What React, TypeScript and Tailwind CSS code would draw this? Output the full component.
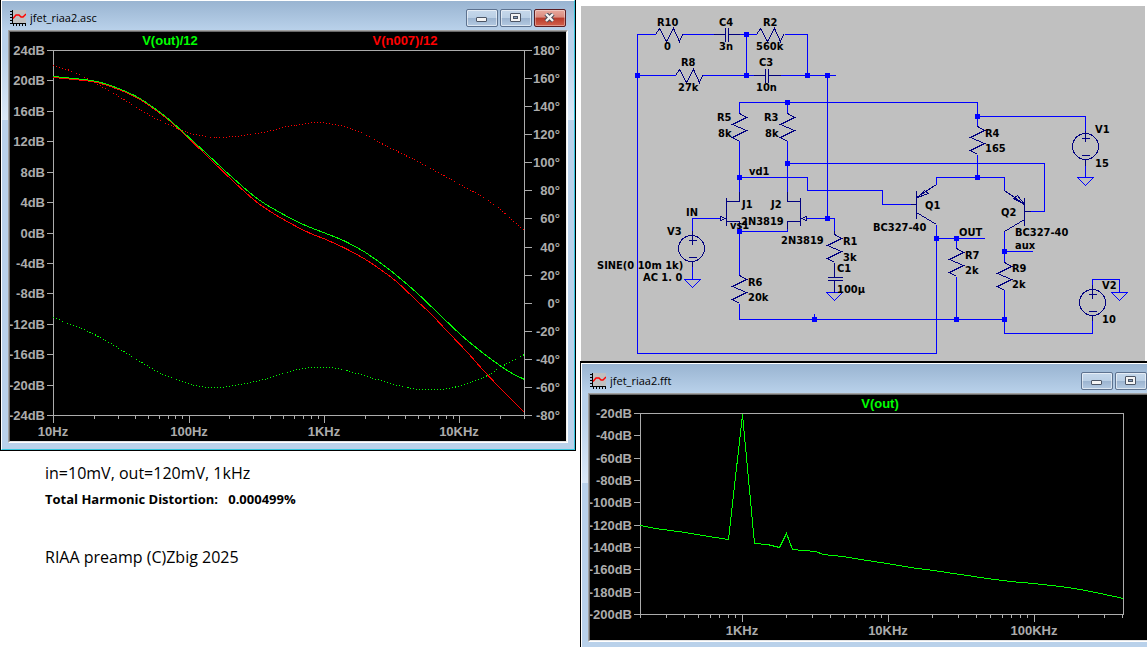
import type { ReactNode } from "react";

type Point = [number, number];

const WIRE = "#0000ff";
const PART = "#000080";
const AXIS = "#acacac";

const join = (points: Point[]) => points.map((p) => p.join(",")).join(" ");

// Catmull-Rom spline through the sampled points
function smooth(points: Point[]) {
  let d = `M${points[0][0]} ${points[0][1]}`;
  for (let i = 0; i < points.length - 1; i++) {
    const p0 = points[Math.max(i - 1, 0)];
    const p1 = points[i];
    const p2 = points[i + 1];
    const p3 = points[Math.min(i + 2, points.length - 1)];
    d += `C${p1[0] + (p2[0] - p0[0]) / 6} ${p1[1] + (p2[1] - p0[1]) / 6} ${p2[0] - (p3[0] - p1[0]) / 6} ${p2[1] - (p3[1] - p1[1]) / 6} ${p2[0]} ${p2[1]}`;
  }
  return d;
}

/* ---------- window chrome ---------- */

function PlotIcon() {
  return (
    <svg width="16" height="16" viewBox="0 0 16 16" shapeRendering="crispEdges" aria-hidden="true">
      <rect x="2" width="14" height="14" fill="#c0c0c0" />
      <path d="M2 0h1v13h13v1H2z" fill="#000" />
      <path d="M0 1h2v1H0zM0 4h2v1H0zM0 7h2v1H0zM0 10h2v1H0zM0 13h2v1H0z" fill="#000" />
      <path d="M3 14h1v2H3zM6 14h1v2H6zM9 14h1v2H9zM12 14h1v2h-1zM15 14h1v2h-1z" fill="#000" />
      <path d="M3 8.5l3-3.5h3l2 2h2l3-3" fill="none" stroke="#f00" strokeWidth="1.4" shapeRendering="auto" />
    </svg>
  );
}

function CaptionButton({ kind }: { kind: "Minimize" | "Maximize" | "Close" }) {
  const look =
    kind === "Close"
      ? "border-[#5a1d22] bg-[linear-gradient(#e8a99e_0%,#d98a7e_45%,#b83a2a_50%,#d2614d_100%)] shadow-[inset_0_0_0_1px_rgba(255,255,255,0.35)]"
      : "border-[#5d728f] bg-[linear-gradient(#c6d8eb_0%,#bacfe5_50%,#9bb3cf_50%,#b4cae2_100%)] shadow-[inset_0_0_0_1px_rgba(255,255,255,0.55)]";
  return (
    <button type="button" aria-label={kind} className={`flex h-[18px] w-8 items-center justify-center rounded-xs border ${look}`}>
      <svg width="12" height="10" viewBox="0 0 12 10" aria-hidden="true">
        {kind === "Minimize" && <rect x="0.5" y="4.5" width="10" height="4" rx="0.5" fill="#f4f4f4" stroke="#4c5565" />}
        {kind === "Maximize" && (
          <>
            <rect x="0.5" y="0.5" width="10" height="8" rx="0.5" fill="#f4f4f4" stroke="#4c5565" />
            <rect x="3.5" y="3.5" width="4" height="2" fill="#8ba3c1" stroke="#4c5565" />
          </>
        )}
        {kind === "Close" && (
          <>
            <path d="M2 1l7 7M9 1l-7 7" stroke="#4c4c58" strokeWidth="4.4" />
            <path d="M2 1l7 7M9 1l-7 7" stroke="#f4f4f4" strokeWidth="2.4" />
          </>
        )}
      </svg>
    </button>
  );
}

interface PlotWindowProps {
  title: string;
  clipped?: boolean;
  children: ReactNode;
}

function PlotWindow({ title, clipped = false, children }: PlotWindowProps) {
  return (
    <section className={`border-l border-black ${clipped ? "border-t-2" : "border-r border-b"}`}>
      <div
        className={`border-t border-l border-white bg-[linear-gradient(#99b4d1_0px,#b9d1ea_29px,#b9d1ea_50px,#dbe8f6_119px,#b9d1ea_119px)] pl-[6px] ${
          clipped ? "pb-[5px]" : "border-r border-b border-r-[#35c5dc] border-b-[#35c5dc] pr-[6px] pb-[6px]"
        }`}
      >
        <header className={`flex h-[29px] items-center pt-[5px] pl-[2px] ${clipped ? "" : "pr-[2px]"}`}>
          <PlotIcon />
          <h2 className="ml-1 flex-1 truncate font-['Open_Sans',sans-serif] text-[11px] leading-4 text-black">{title}</h2>
          <div className="flex gap-[2px]">
            <CaptionButton kind="Minimize" />
            <CaptionButton kind="Maximize" />
            {!clipped && <CaptionButton kind="Close" />}
          </div>
        </header>
        <div className={`border-t border-l border-[#a0a0a0] ${clipped ? "" : "border-r border-r-white"} border-b border-b-white`}>
          <div className={`border-t border-l border-[#696969] bg-black ${clipped ? "" : "border-r border-r-[#f0f0f0]"} border-b border-b-[#e3e3e3]`}>
            {children}
          </div>
        </div>
      </div>
    </section>
  );
}

/* ---------- plots ---------- */

interface AxisProps {
  left: number;
  right: number;
  top: number;
  bottom: number;
  yLabels: string[];
  rightLabels?: string[];
  // x position of 1 Hz and width of one decade
  origin: number;
  decade: number;
  from: number;
  to: number;
  xLabels: Record<number, string>;
}

function Axes({ left, right, top, bottom, yLabels, rightLabels, origin, decade, from, to, xLabels }: AxisProps) {
  const yStep = (bottom - top) / (yLabels.length - 1);
  const freqs: number[] = [];
  for (let e = 1; e < 6; e++) {
    for (let m = 1; m < 10; m++) {
      const f = m * 10 ** e;
      if (f >= from && f <= to) freqs.push(f);
    }
  }
  return (
    <g className="font-['Liberation_Sans',Arial,sans-serif] text-[13px] font-bold" fill={AXIS}>
      <g transform="translate(.5 .5)" stroke={AXIS} fill="none" shapeRendering="crispEdges">
        <rect x={left} y={top} width={right - left} height={bottom - top} />
        {yLabels.map((l, i) => (
          <path key={l} d={`M${left - 7} ${Math.round(top + i * yStep)}H${left}`} />
        ))}
        {rightLabels?.map((l, i) => (
          <path key={l} d={`M${right} ${Math.round(top + (i * (bottom - top)) / (rightLabels.length - 1))}h7`} />
        ))}
        {freqs.map((f) => (
          <path key={f} d={`M${Math.round(origin + Math.log10(f) * decade)} ${bottom}v${xLabels[f] ? 7 : 3}`} />
        ))}
      </g>
      {yLabels.map((l, i) => (
        <text key={l} x={left - 8} y={Math.round(top + i * yStep) + 5} textAnchor="end">
          {l}
        </text>
      ))}
      {rightLabels?.map((l, i) => (
        <text key={l} x={right + 36} y={Math.round(top + (i * (bottom - top)) / (rightLabels.length - 1)) + 5} textAnchor="end">
          {l}
        </text>
      ))}
      {Object.entries(xLabels).map(([f, l]) => (
        <text key={f} x={Math.round(origin + Math.log10(Number(f)) * decade)} y={bottom + 21} textAnchor="middle">
          {l}
        </text>
      ))}
    </g>
  );
}

const GAIN_OUT: Point[] = [
  [53, 76], [91, 80], [110, 85], [134, 95], [150, 105], [165, 116], [182, 131], [207, 154], [233, 178],
  [258, 199], [283, 214], [305, 225], [323, 232], [345, 241], [365, 252], [390, 270], [417, 293],
  [440, 315], [460, 334], [473, 345], [487, 356], [498, 364], [510, 372], [524, 379],
];
const GAIN_N007: Point[] = [
  [53, 77], [91, 81], [110, 86], [134, 96], [150, 106], [165, 117], [182, 132], [207, 156], [233, 181],
  [258, 203], [283, 219], [310, 233], [323, 238], [345, 248], [365, 259], [380, 269], [397, 282],
  [417, 301], [430, 313], [447, 331], [467, 352], [483, 370], [500, 388], [513, 401], [524, 412],
];
const PHASE_N007: Point[] = [
  [53, 65], [72, 71], [90, 80], [110, 91], [133, 105], [153, 117], [170, 125], [187, 132], [200, 135], [213, 137],
  [233, 136], [250, 134], [267, 131], [287, 126], [300, 124], [316, 122], [335, 124], [350, 128], [367, 135],
  [383, 144], [403, 154], [423, 164], [443, 175], [463, 186], [483, 197], [500, 209], [510, 218], [524, 230],
];
const PHASE_OUT: Point[] = [
  [53, 317], [73, 325], [90, 332], [110, 343], [133, 357], [153, 369], [170, 377], [187, 383], [200, 386], [217, 387],
  [233, 385], [250, 382], [267, 378], [283, 373], [303, 368], [323, 367], [337, 368], [353, 372], [370, 377], [390, 383],
  [407, 387], [420, 389], [437, 389], [453, 387], [473, 381], [487, 375], [503, 365], [524, 354],
];
const SPECTRUM: Point[] = [
  [640, 525], [655, 528], [685, 532], [708, 536], [728, 539], [742, 414], [754, 543], [767, 544], [779, 547], [786, 533],
  [792, 549], [815, 551], [823, 554], [842, 556], [860, 559], [880, 562], [910, 567], [933, 570], [960, 574], [987, 578],
  [1010, 581], [1033, 583], [1060, 586], [1080, 589], [1100, 593], [1123, 598],
];

function BodePlot() {
  return (
    <svg viewBox="10 32 556 409" className="block w-full" role="img" aria-label="Frequency response">
      <Axes
        left={53}
        right={524}
        top={50}
        bottom={415}
        yLabels={["24dB", "20dB", "16dB", "12dB", "8dB", "4dB", "0dB", "-4dB", "-8dB", "-12dB", "-16dB", "-20dB", "-24dB"]}
        rightLabels={["180°", "160°", "140°", "120°", "100°", "80°", "60°", "40°", "20°", "0°", "-20°", "-40°", "-60°", "-80°"]}
        origin={-82}
        decade={135.3}
        from={10}
        to={30000}
        xLabels={{ 10: "10Hz", 100: "100Hz", 1000: "1KHz", 10000: "10KHz" }}
      />
      <g transform="translate(.5 .5)" fill="none" shapeRendering="crispEdges">
        <path d={smooth(PHASE_N007)} stroke="#ff0000" strokeDasharray="1 2" />
        <path d={smooth(PHASE_OUT)} stroke="#00ff00" strokeDasharray="1 2" />
        <path d={smooth(GAIN_N007)} stroke="#ff0000" />
        <path d={smooth(GAIN_OUT)} stroke="#00ff00" />
      </g>
      <g className="font-['Liberation_Sans',Arial,sans-serif] text-[13px] font-bold" textAnchor="middle">
        <text x="170" y="45" fill="#00ff00">V(out)/12</text>
        <text x="405" y="45" fill="#ff0000">V(n007)/12</text>
      </g>
    </svg>
  );
}

function FftPlot() {
  return (
    <svg viewBox="590 395 557 245" className="block w-full" role="img" aria-label="Output spectrum">
      <Axes
        left={640}
        right={1123}
        top={413}
        bottom={614}
        yLabels={["-20dB", "-40dB", "-60dB", "-80dB", "-100dB", "-120dB", "-140dB", "-160dB", "-180dB", "-200dB"]}
        origin={304}
        decade={146}
        from={200}
        to={400000}
        xLabels={{ 1000: "1KHz", 10000: "10KHz", 100000: "100KHz" }}
      />
      <polyline points={join(SPECTRUM)} transform="translate(.5 .5)" fill="none" stroke="#00ff00" shapeRendering="crispEdges" />
      <text x="880" y="408" fill="#00ff00" textAnchor="middle" className="font-['Liberation_Sans',Arial,sans-serif] text-[13px] font-bold">
        V(out)
      </text>
    </svg>
  );
}

/* ---------- schematic ---------- */

const WIRES = [
  "M655 34H637V353H936V224",
  "M682 34H713M739 34H756M784 34H807V75",
  "M637 75H675M702 75H753M780 75H835",
  "M746 34V75M827 75V218",
  "M739 113V102H977V125M787 102V113M977 116H1085V130",
  "M739 140V191M787 140V191",
  "M787 163H1044V211H1030",
  "M739 177H807V190H882V204H910",
  "M977 154V177M936 184V177H1004V190",
  "M936 238H984M956 238V248M956 276V319",
  "M1004 231V262M1004 251H1032M1004 289V333H1092V320",
  "M739 303V319H1004M814 313V319",
  "M739 231H787V228M739 226V275",
  "M692 230V218H720M692 266V279",
  "M806 218H834V230",
  "M1085 165V177M1092 284V279H1119V292",
];

const PARTS = [
  // capacitors
  "M713 34H725M725 27V41M728 27V41M728 34H739",
  "M753 75H765M765 68V82M768 68V82M768 75H780",
  "M834 262V277M827 277H842M827 280H842M834 280V292M834 230V234",
  // jfets
  "M726 197V225M726 201H739V191M726 221H739V226M720 216V220L725 218Z",
  "M800 197V225M800 201H787V191M800 221H787V228M806 216V220L801 218Z",
  // bipolars
  "M916 190V218M910 204H916M936 184L916 197M924 190L928 193L917 197ZM916 212L936 224",
  "M1024 197V225M1030 211H1024M1004 190L1024 204M1013 198L1017 195L1024 204ZM1024 219L1004 231",
  // sources
  "M1085 130V141M1081 138H1089M1081 155H1089M1085 159V165",
  "M1092 284V298M1088 294H1096M1088 311H1096M1092 315V320",
  "M692 230V244M688 240H696M688 257H696M692 261V266",
];

const GROUNDS: Point[] = [[1085, 177], [1119, 292], [692, 279], [834, 292]];
const SOURCES: Point[] = [[1085, 146], [1092, 302], [691, 248]];
const VERTICAL: Point[] = [[739, 113], [787, 113], [977, 126], [956, 248], [1004, 262], [834, 234], [739, 275]];
const HORIZONTAL: Point[] = [[655, 34], [756, 34], [675, 75]];
const NODES: Point[] = [
  [746, 34], [637, 75], [746, 75], [807, 75], [827, 75], [787, 102], [977, 116], [787, 163], [739, 177],
  [977, 177], [739, 231], [827, 218], [936, 238], [956, 238], [1004, 251], [956, 319], [1004, 319], [814, 319],
];

const LABELS: [number, number, string][] = [
  [657, 26, "R10"], [664, 50, "0"], [719, 26, "C4"], [719, 50, "3n"], [763, 26, "R2"], [756, 50, "560k"],
  [681, 66, "R8"], [678, 91, "27k"], [759, 66, "C3"], [756, 91, "10n"],
  [717, 121, "R5"], [718, 137, "8k"], [764, 121, "R3"], [765, 137, "8k"], [749, 175, "vd1"],
  [985, 137, "R4"], [985, 152, "165"], [1095, 133, "V1"], [1095, 167, "15"],
  [686, 216, "IN"], [667, 235, "V3"], [597, 269, "SINE(0 10m 1k)"], [643, 281, "AC 1. 0"],
  [742, 208, "J1"], [771, 208, "J2"], [741, 225, "2N3819"], [730, 229, "vs1"], [781, 244, "2N3819"],
  [843, 245, "R1"], [843, 261, "3k"], [837, 272, "C1"], [837, 293, "100µ"], [748, 286, "R6"], [748, 301, "20k"],
  [925, 209, "Q1"], [873, 231, "BC327-40"], [959, 236, "OUT"], [1001, 216, "Q2"], [1015, 236, "BC327-40"],
  [1015, 249, "aux"], [965, 259, "R7"], [965, 274, "2k"], [1012, 272, "R9"], [1012, 288, "2k"],
  [1102, 289, "V2"], [1102, 323, "10"],
];

function Schematic() {
  return (
    <svg viewBox="581 6 564 355" className="block w-full bg-[#c0c0c0]" role="img" aria-label="Preamp schematic">
      <g transform="translate(.5 .5)" fill="none" shapeRendering="crispEdges">
        <g stroke={WIRE}>
          {WIRES.map((d) => (
            <path key={d} d={d} />
          ))}
          {GROUNDS.map(([x, y]) => (
            <path key={`${x}-${y}`} d={`M${x - 8} ${y}h16l-8 8z`} />
          ))}
        </g>
        <g stroke={PART}>
          {PARTS.map((d) => (
            <path key={d} d={d} />
          ))}
          {SOURCES.map(([x, y]) => (
            <circle key={x} cx={x} cy={y} r="13" />
          ))}
          {VERTICAL.map(([x, y]) => (
            <path key={`${x}-${y}`} d={`M${x} ${y}l7 4l-14 7l14 6l-14 7l7 4`} />
          ))}
          {HORIZONTAL.map(([x, y]) => (
            <path key={`${x}-${y}`} d={`M${x} ${y}l4 -6l7 13l7 -13l6 13l3 -7`} />
          ))}
        </g>
      </g>
      {NODES.map(([x, y]) => (
        <rect key={`${x}-${y}`} x={x - 2} y={y - 2} width="5" height="5" fill={WIRE} />
      ))}
      <g className="font-['DejaVu_Sans_Condensed','DejaVu_Sans',Verdana,sans-serif] text-[11px] font-bold" fill="#000">
        {LABELS.map(([x, y, text]) => (
          <text key={`${x}-${y}`} x={x} y={y}>
            {text}
          </text>
        ))}
      </g>
    </svg>
  );
}

export default function App() {
  return (
    <main className="grid grid-cols-[576fr_567fr] gap-x-1 bg-white">
      <div className="min-w-0">
        <PlotWindow title="jfet_riaa2.asc">
          <BodePlot />
        </PlotWindow>
        <div className="pt-[10px] pl-[45px] font-['Open_Sans',sans-serif] text-black">
          <p className="text-base leading-6">in=10mV, out=120mV, 1kHz</p>
          <p className="mt-1 text-[13px] leading-5 font-bold whitespace-pre">Total Harmonic Distortion:   0.000499%</p>
          <p className="mt-9 text-base leading-6">RIAA preamp (C)Zbig 2025</p>
        </div>
      </div>
      <div className="min-w-0 pt-[6px]">
        <div className="pr-[2px] pl-px">
          <Schematic />
        </div>
        <PlotWindow title="jfet_riaa2.fft" clipped>
          <FftPlot />
        </PlotWindow>
      </div>
    </main>
  );
}
